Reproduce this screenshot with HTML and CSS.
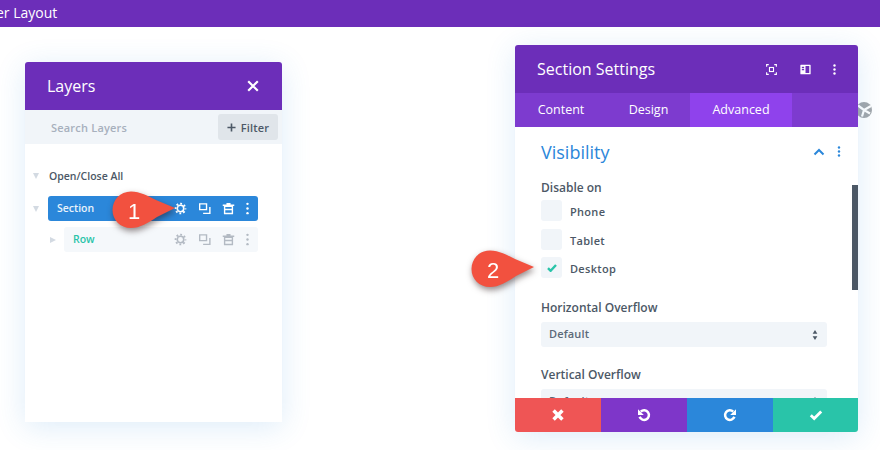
FILE: index.html
```html
<!DOCTYPE html>
<html lang="en">
<head>
<meta charset="utf-8">
<title>Layer Layout</title>
<link rel="stylesheet" href="styles.css">
</head>
<body>
<header class="topbar"><span class="topbar-title">er Layout</span></header>
<main class="canvas">
  <section class="layers">
    <div class="layers-head">
      <h2>Layers</h2>
      <svg class="close" viewBox="0 0 12 12"><path d="M1.2 1.2 10.8 10.8M10.8 1.2 1.2 10.8"/></svg>
    </div>
    <div class="search">
      <span class="search-text">Search Layers</span>
      <span class="filter"><svg viewBox="0 0 10 10"><path d="M5 .5v9M.5 5h9"/></svg>Filter</span>
    </div>
    <div class="tree">
      <div class="open-all"><i class="tri down"></i><span>Open/Close All</span></div>
      <div class="tree-row">
        <i class="tri down"></i>
        <div class="item item-section">
          <span>Section</span>
          <div class="tools">
            <svg viewBox="0 0 14 14"><use href="#gear"/></svg>
            <svg viewBox="0 0 14 14"><use href="#dup"/></svg>
            <svg viewBox="0 0 14 14"><use href="#trash"/></svg>
            <svg class="tool-dots" viewBox="0 0 14 14"><use href="#dots"/></svg>
          </div>
        </div>
      </div>
      <div class="tree-row row-child">
        <i class="tri right"></i>
        <div class="item item-row">
          <span>Row</span>
          <div class="tools">
            <svg viewBox="0 0 14 14"><use href="#gear"/></svg>
            <svg viewBox="0 0 14 14"><use href="#dup"/></svg>
            <svg viewBox="0 0 14 14"><use href="#trash"/></svg>
            <svg class="tool-dots" viewBox="0 0 14 14"><use href="#dots"/></svg>
          </div>
        </div>
      </div>
    </div>
  </section>

  <section class="settings">
    <div class="set-head">
      <h2>Section Settings</h2>
      <div class="set-icons">
        <svg viewBox="0 0 12 12"><path class="ln" d="M.7 3V.7H3M9 .7h2.3V3M11.3 9v2.3H9M3 11.3H.7V9"/><rect x="3.8" y="3.8" width="4.4" height="4.4" class="ln"/></svg>
        <svg viewBox="0 0 12 12"><path class="fill" fill-rule="evenodd" d="M1 .8h10a.6.6 0 0 1 .6.6v9.2a.6.6 0 0 1-.6.6H1a.6.6 0 0 1-.6-.6V1.400a.6.6 0 0 1 .6-.6zM6 2.300v7.400h4.100V2.300zM2 3v1.400h2.500V3zM2 5.300v1.400h2.500V5.300z"/></svg>
        <svg class="head-dots" viewBox="0 0 12 12"><circle class="fill" cx="6" cy="1.600" r="1.300"/><circle class="fill" cx="6" cy="6" r="1.300"/><circle class="fill" cx="6" cy="10.400" r="1.300"/></svg>
      </div>
    </div>
    <nav class="tabs">
      <span class="tab tab-content">Content</span>
      <span class="tab tab-design">Design</span>
      <span class="tab tab-active">Advanced</span>
    </nav>
    <div class="set-body">
      <div class="vis-head">
        <h3>Visibility</h3>
        <svg class="chev" viewBox="0 0 12 8"><path d="M1.500 6.500 6 2l4.500 4.500"/></svg>
        <svg class="vdots" viewBox="0 0 4 12"><circle cx="2" cy="1.600" r="1.300"/><circle cx="2" cy="6" r="1.300"/><circle cx="2" cy="10.400" r="1.300"/></svg>
      </div>
      <div class="label label-disable">Disable on</div>
      <div class="check"><i class="box"></i><span>Phone</span></div>
      <div class="check"><i class="box"></i><span>Tablet</span></div>
      <div class="check"><i class="box"><svg viewBox="0 0 10 8"><path d="M1 4.200 3.600 6.800 9 1"/></svg></i><span>Desktop</span></div>
      <div class="label label-h">Horizontal Overflow</div>
      <div class="select"><span>Default</span><svg viewBox="0 0 6 11"><path d="M3 0 5.600 4H.4zM3 11 .4 7h5.200z"/></svg></div>
      <div class="label label-v">Vertical Overflow</div>
      <div class="select"><span>Default</span><svg viewBox="0 0 6 11"><path d="M3 0 5.600 4H.4zM3 11 .4 7h5.200z"/></svg></div>
    </div>
    <div class="scrollbar"></div>
    <div class="set-foot">
      <span class="btn btn-red"><svg viewBox="0 0 12 12"><path class="x" d="M2.200 2.200 9.800 9.800M9.800 2.200 2.200 9.800"/></svg></span>
      <span class="btn btn-purple"><svg viewBox="0 0 14 14"><path class="arc" d="M3.800 3.600A4.800 4.800 0 1 1 2.600 8.800"/><path class="fill" d="M1 1.200v5.800h5.800z"/></svg></span>
      <span class="btn btn-blue"><svg viewBox="0 0 14 14"><path class="arc" d="M10.200 3.600A4.800 4.800 0 1 0 11.400 8.800"/><path class="fill" d="M13 1.200v5.800H7.200z"/></svg></span>
      <span class="btn btn-green"><svg viewBox="0 0 14 12"><path class="tick" d="M1.800 6.200 5.200 9.600 12.200 2.400"/></svg></span>
    </div>
    <div class="globe">
      <svg viewBox="0 0 16 16"><circle cx="8" cy="8" r="8"/><path class="cut" d="M2 3.500 8 8M8 8 6 14.500M8 8l7-4M8 8l6 3.500"/></svg>
    </div>
  </section>
</main>

<div class="callout callout-1">
  <svg viewBox="0 0 64 38"><path d="M19 .5C28 .5 36 5 44 9L63 17 45 26C36 32 28 37 19 37 8 37 .5 29 .5 19S8 .5 19 .5z"/></svg>
  <span>1</span>
</div>
<div class="callout callout-2">
  <svg viewBox="0 0 64 38"><path d="M19 .5C28 .5 36 5 44 9L63 17 45 26C36 32 28 37 19 37 8 37 .5 29 .5 19S8 .5 19 .5z"/></svg>
  <span>2</span>
</div>

<svg class="defs" width="0" height="0">
  <defs>
    <g id="gear"><circle cx="7" cy="7" r="5.300" fill="none" stroke="currentColor" stroke-width="2" stroke-dasharray="2 2.163" stroke-dashoffset="1"/><circle cx="7" cy="7" r="3.500" fill="none" stroke="currentColor" stroke-width="1.700"/></g>
    <g id="dup"><path fill="none" stroke="currentColor" stroke-width="1.500" d="M1.800 2h7.400v6.200H1.800zM12.800 5.500v6.700H5.500"/></g>
    <g id="trash"><path fill="none" stroke="currentColor" stroke-width="1.500" d="M2.800 4.600v7.800h8.400V4.600zM.8 3.500h12.400M2.800 8h8.400"/><path fill="currentColor" d="M4.800 1.200h4.400v2H4.800z"/></g>
    <g id="dots"><circle cx="7" cy="2" r="1.300" fill="currentColor"/><circle cx="7" cy="7" r="1.300" fill="currentColor"/><circle cx="7" cy="12" r="1.300" fill="currentColor"/></g>
  </defs>
</svg>
</body>
</html>
```
FILE: styles.css
```css
* { box-sizing: border-box; }
html, body { margin: 0; padding: 0; }
body {
  width: 880px; height: 450px; overflow: hidden; position: relative;
  background: #fff;
  font-family: "Open Sans", "Liberation Sans", sans-serif;
  font-weight: 600; color: #4c5866;
}
h2, h3 { margin: 0; font-weight: 500; }
.defs { position: absolute; }

.topbar { height: 27px; background: #6c2eb9; overflow: hidden; color: #fff; font-size: 14px; font-weight: 500; line-height: 26px; }
.topbar-title { display: block; margin-left: -4px; }

.canvas { display: flex; align-items: flex-start; padding-left: 25px; }

/* Layers */
.layers {
  width: 257px; height: 360px; margin-top: 35px; background: #fff; border-radius: 3px 3px 0 0;
  box-shadow: 0 5px 30px rgba(43, 135, 218, .16);
  overflow: hidden;
}
.layers-head { height: 48px; background: #6c2eb9; color: #fff; display: flex; align-items: center; justify-content: space-between; padding: 0 23px 0 22px; }
.layers-head h2 { font-size: 16px; }
.close { width: 12px; height: 12px; }
.close path { fill: none; stroke: #fff; stroke-width: 2.200; }
.search { height: 34px; background: #f1f5f9; display: flex; align-items: center; justify-content: space-between; padding: 0 4px 0 26px; }
.search-text { font-size: 11px; color: #a7b0bd; letter-spacing: .2px; }
.filter { width: 60px; height: 26px; background: #e0e5ea; border-radius: 3px; display: flex; align-items: center; justify-content: center; gap: 5px; font-size: 11px; color: #4c5866; letter-spacing: .2px; }
.filter svg { width: 9px; height: 9px; }
.filter path { fill: none; stroke: #4c5866; stroke-width: 1.800; }

.tree { padding: 25px 24px 0 8px; }
.open-all { display: flex; align-items: center; height: 14px; font-size: 10.500px; color: #4c5866; }
.open-all span { margin-left: 10px; }
.tri { display: block; width: 0; height: 0; flex: none; }
.tri.down { border-left: 3.500px solid transparent; border-right: 3.500px solid transparent; border-top: 6px solid #d3dae2; }
.tri.right { border-top: 3.500px solid transparent; border-bottom: 3.500px solid transparent; border-left: 6px solid #d3dae2; }
.tree-row { display: flex; align-items: center; margin-top: 13px; }
.tree-row .tri.down { margin-right: 9px; }
.row-child { margin-top: 6px; padding-left: 17px; }
.row-child .tri { margin-right: 8px; }
.item { height: 25px; border-radius: 3px; display: flex; align-items: center; justify-content: space-between; font-size: 10.500px; flex: 1; padding-left: 9px; }
.item > span { padding-bottom: 1px; }
.item-section { background: #2b87da; color: #e8f2fb; }
.item-row { background: #f5f8fb; color: #29c4a9; padding-left: 9px; }
.tools { display: flex; align-items: center; gap: 11px; padding-right: 4px; }
.tools svg { width: 13px; height: 13px; }
.tools .tool-dots { margin-left: -5px; }
.item-section .tools { color: #fff; }
.item-row .tools { color: #b3bac3; }

/* Settings */
.settings {
  position: relative;
  width: 343px; height: 387px; margin-top: 18px; margin-left: 233px; background: #fff; border-radius: 3px;
  box-shadow: 0 5px 30px rgba(43, 135, 218, .16);
}
.set-head { height: 48px; background: #6c2eb9; border-radius: 3px 3px 0 0; color: #fff; display: flex; align-items: center; justify-content: space-between; padding: 0 18px 0 22px; }
.set-head h2 { font-size: 16px; }
.set-icons { display: flex; align-items: center; gap: 23px; }
.set-icons svg { width: 11px; height: 11px; }
.set-icons .head-dots { margin-left: -5px; }
.set-icons .ln { fill: none; stroke: #fff; stroke-width: 1.200; }
.set-icons .fill { fill: #fff; }
.tabs { height: 34px; background: #7d3bcf; display: flex; color: #fff; font-size: 12.500px; font-weight: 500; line-height: 34px; }
.tab { display: block; text-align: center; }
.tab-content { width: 92px; }
.tab-design { width: 83px; }
.tab-active { width: 102px; background: #8f42ec; }

.set-body { height: 271px; overflow: hidden; padding: 0 31px 0 26px; }
.vis-head { display: flex; align-items: center; padding-top: 13px; height: 36px; }
.vis-head h3 { font-size: 18px; font-weight: 400; color: #2b87da; flex: 1; }
.chev { width: 12px; height: 8px; margin-right: 12px; }
.chev path { fill: none; stroke: #2b87da; stroke-width: 2; }
.vdots { width: 4px; height: 11px; fill: #2b87da; margin-right: -14px; }
.label { font-size: 12px; color: #4c5866; line-height: 16px; }
.label-disable { margin-top: 17px; margin-bottom: 4px; }
.label-h { margin-top: 22px; margin-bottom: 6px; }
.label-v { margin-top: 20px; margin-bottom: 6px; }
.check { display: flex; align-items: center; gap: 8px; height: 21px; margin-bottom: 7.500px; font-size: 11px; color: #4c5866; letter-spacing: .3px; }
.check span { padding-top: 2px; }
.box { width: 21px; height: 21px; background: #f1f5f9; border-radius: 3px; display: flex; align-items: center; justify-content: center; }
.box svg { width: 10px; height: 8px; }
.box path { fill: none; stroke: #29c4a9; stroke-width: 2.400; }
.select { height: 25px; width: 286px; background: #f1f5f9; border-radius: 3px; display: flex; align-items: center; justify-content: space-between; padding: 0 9px 0 8px; font-size: 11px; color: #5c6978; letter-spacing: .15px; }
.select span { padding-bottom: 2px; }
.select svg { width: 6px; height: 10px; fill: #4c5866; }
.scrollbar { position: absolute; right: 0; top: 140px; width: 6px; height: 105px; background: #4c5866; }

.set-foot { display: grid; grid-template-columns: 86px 86px 86px 85px; height: 34px; border-radius: 0 0 3px 3px; overflow: hidden; position: relative; }
.btn { display: flex; align-items: center; justify-content: center; }
.btn-red { background: #ef5555; }
.btn-purple { background: #7e36c9; }
.btn-blue { background: #2b87da; }
.btn-green { background: #29c4a9; }
.btn svg { width: 14px; height: 14px; }
.btn .x { fill: none; stroke: #fff; stroke-width: 3; }
.btn .arc { fill: none; stroke: #fff; stroke-width: 2.500; }
.btn .fill { fill: #fff; }
.btn .tick { fill: none; stroke: #fff; stroke-width: 2.800; }

.globe { position: absolute; left: 326px; top: 48px; width: 38px; height: 34px; background: #fff; border-radius: 50%; display: flex; align-items: center; justify-content: flex-end; z-index: -1; }
.globe svg { width: 16px; height: 16px; margin-right: 7px; }
.globe circle { fill: #a3a7ab; }
.globe .cut { fill: none; stroke: #fff; stroke-width: 2.200; }

/* Callouts */
.callout { position: absolute; width: 64px; height: 38px; filter: drop-shadow(1px 3px 3px rgba(40, 20, 20, .5)); }
.callout svg { display: block; width: 100%; height: 100%; fill: #f2513f; }
.callout span { position: absolute; left: 0; top: 0; width: 44px; line-height: 41px; text-align: center; color: #fff; font-family: "Liberation Sans", sans-serif; font-size: 22px; font-weight: 400; }
.callout-1 { left: 112px; top: 191px; }
.callout-2 { left: 471px; top: 250px; }
```
